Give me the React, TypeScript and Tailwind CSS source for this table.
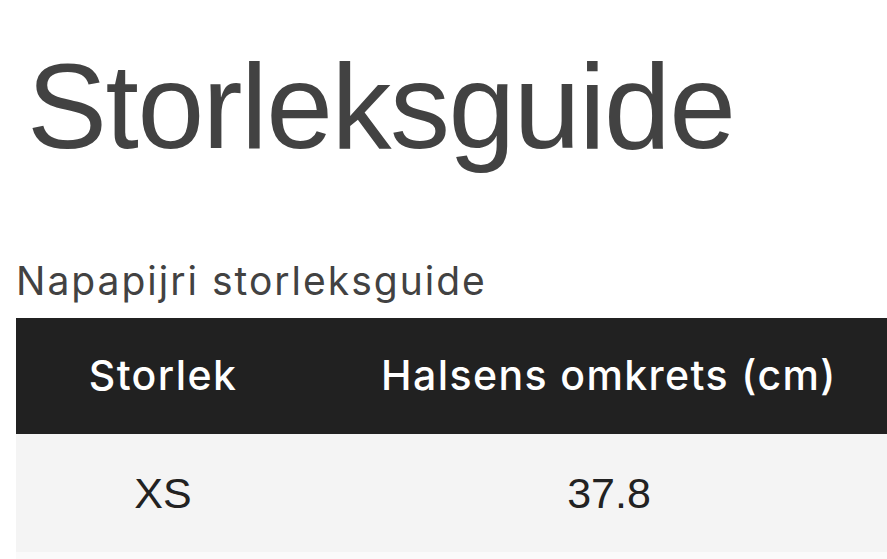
export default function App() {
  return (
    <div className="w-[887px] h-[559px] overflow-hidden bg-white">
      <h1
        className="mt-[46px] pl-[27px] text-[120px] leading-[120px] text-[#424242] font-normal tracking-[-1.5px]"
        style={{ fontFamily: '"Liberation Sans", Arial, sans-serif' }}
      >
        Storleksguide
      </h1>
      <h2
        className="mt-[92px] pl-[16px] text-[39px] leading-[46px] text-[#424242] font-normal tracking-[2px]"
        style={{ fontFamily: 'Inter, "Noto Sans", sans-serif' }}
      >
        Napapijri storleksguide
      </h2>
      <div className="mt-[14px] ml-[16px] w-[892px]">
        <div
          className="flex h-[116px] items-center bg-[#212121] text-white text-[41px] font-medium tracking-[1.4px]"
          style={{ fontFamily: 'Inter, "Noto Sans", sans-serif' }}
        >
          <div className="w-[294px] text-center">Storlek</div>
          <div className="w-[598px] text-center">Halsens omkrets (cm)</div>
        </div>
        <div
          className="flex h-[118px] items-center bg-[#f4f4f4] text-[#222] text-[43px]"
          style={{ fontFamily: '"Liberation Sans", Arial, sans-serif' }}
        >
          <div className="w-[294px] text-center">XS</div>
          <div className="w-[598px] text-center">37.8</div>
        </div>
        <div className="h-[118px] bg-[#fafafa]"></div>
      </div>
    </div>
  );
}
